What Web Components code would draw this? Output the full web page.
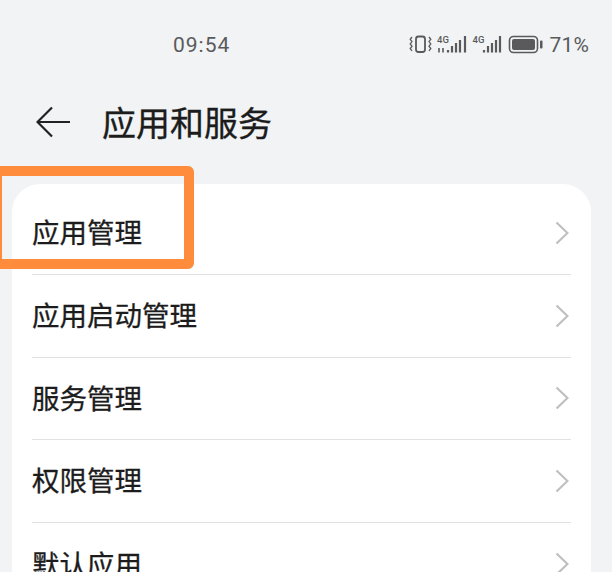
<!DOCTYPE html>
<html>
<head>
<meta charset="utf-8">
<style>
  html, body { margin: 0; height: 100%; overflow: hidden; background: #f1f3f5; }
  body { font-family: "Noto Sans CJK SC", "Noto Sans", sans-serif; color: #1c1c1c; }
</style>
</head>
<body>
<settings-page>
  <status-bar slot="status" time="09:54" battery="71%"></status-bar>
  <title-bar slot="title">应用和服务</title-bar>
  <settings-card>
    <settings-row>应用管理</settings-row>
    <settings-row>应用启动管理</settings-row>
    <settings-row>服务管理</settings-row>
    <settings-row>权限管理</settings-row>
    <settings-row last>默认应用</settings-row>
  </settings-card>
  <focus-mark></focus-mark>
</settings-page>

<script>
class SettingsPage extends HTMLElement {
  constructor(){
    super();
    this.attachShadow({ mode: 'open' }).innerHTML = /*html*/ `
      <style>
        :host{
          display: block;
          position: relative;
          width: 612px;
          height: 572px;
          overflow: hidden;
          background: #f1f3f5;
        }
      </style>
      <slot name="status"></slot>
      <slot name="title"></slot>
      <slot></slot>
    `;
  }
}

class StatusBar extends HTMLElement {
  constructor(){
    super();
    const time = this.getAttribute('time');
    const battery = this.getAttribute('battery');
    this.attachShadow({ mode: 'open' }).innerHTML = /*html*/ `
      <style>
        :host{
          display: flex;
          align-items: center;
          height: 30px;
          padding: 30px 23px 0 173px;
          color: #5a5a5c;
          font-family: "Roboto", "Noto Sans", sans-serif;
          font-size: 21px;
        }
        .time{ flex: 1; letter-spacing: 1px; }
        .icons{ display: flex; align-items: center; }
        svg{ display: block; }
        .level{ margin-left: 5px; letter-spacing: .2px; }
        text{ font: 500 9.500px "Roboto", sans-serif; fill: #5a5a5c; }
      </style>
      <span class="time">${time}</span>
      <span class="icons">
        <svg width="136" height="24" viewBox="0 0 136 24" fill="none" stroke="#5a5a5c">
          <rect x="8" y="3.500" width="9" height="15.500" rx="2.500" stroke-width="1.800"/>
          <path d="M4 4l-1.800 2.300L4 8.600 2.200 10.900 4 13.200l-1.800 2.300L4 17.800M21 4l1.800 2.300L21 8.600l1.800 2.300L21 13.200l1.800 2.300L21 17.800" stroke-width="1.300"/>
          <text x="29" y="10" stroke="none">4G</text>
          <path d="M31 15v4.500M35 15v4.500" stroke-width="1.600"/>
          <path d="M40 17v2.500M44 13v6.500M48 10v9.500M52 7v12.500M57 3v16.500" stroke-width="2.200"/>
          <text x="64.500" y="10" stroke="none">4G</text>
          <path d="M76 17v2.500M80 13v6.500M84 10v9.500M88 7v12.500M92 3v16.500" stroke-width="2.200"/>
          <rect x="101.500" y="3.500" width="28" height="16" rx="4" stroke-width="1.600"/>
          <rect x="104" y="6" width="23" height="11" rx="2" fill="#5a5a5c" stroke="none"/>
          <rect x="132" y="7.500" width="2.500" height="8" rx="1" fill="#5a5a5c" stroke="none"/>
        </svg>
        <span class="level">${battery}</span>
      </span>
    `;
  }
}

class TitleBar extends HTMLElement {
  constructor(){
    super();
    this.attachShadow({ mode: 'open' }).innerHTML = /*html*/ `
      <style>
        :host{
          display: flex;
          align-items: center;
          height: 60px;
          margin-top: 32px;
          padding-left: 36px;
          color: #1c1c1c;
          font-size: 34px;
          font-weight: 400;
          -webkit-text-stroke: .35px #1c1c1c;
          line-height: 1;
        }
        svg{ display: block; margin-right: 32px; }
      </style>
      <svg width="34" height="32" viewBox="0 0 34 32" fill="none" stroke="#222" stroke-width="2.200">
        <path d="M34 16H1.500M16 1.500L1.500 16 16 30.500"/>
      </svg>
      <span><slot></slot></span>
    `;
  }
}

class SettingsCard extends HTMLElement {
  constructor(){
    super();
    this.attachShadow({ mode: 'open' }).innerHTML = /*html*/ `
      <style>
        :host{
          display: block;
          margin: 32px 21px 0 12px;
          padding: 8px 20px 0;
          background: #fff;
          border-radius: 28px;
        }
      </style>
      <slot></slot>
    `;
  }
}

class SettingsRow extends HTMLElement {
  constructor(){
    super();
    this.attachShadow({ mode: 'open' }).innerHTML = /*html*/ `
      <style>
        :host{
          display: flex;
          align-items: center;
          justify-content: space-between;
          box-sizing: border-box;
          height: 82.750px;
          padding-right: 2px;
          border-bottom: 1px solid #e1e2e4;
          color: #1c1c1c;
          font-size: 27.500px;
          font-weight: 400;
          -webkit-text-stroke: .3px #1c1c1c;
          line-height: 1;
        }
        :host([last]){ border-bottom: none; }
        span{ margin-bottom: 2px; }
        svg{ display: block; }
      </style>
      <span><slot></slot></span>
      <svg width="14" height="24" viewBox="0 0 14 24" fill="none" stroke="#bfbfc1" stroke-width="2.200">
        <path d="M1.500 1.500L12.500 12 1.500 22.500"/>
      </svg>
    `;
  }
}

// the annotation drawn over the screenshot
class FocusMark extends HTMLElement {
  constructor(){
    super();
    this.attachShadow({ mode: 'open' }).innerHTML = /*html*/ `
      <style>
        :host{
          position: absolute;
          left: -8px;
          top: 166px;
          box-sizing: border-box;
          width: 202px;
          height: 103px;
          border: 10px solid #ff8c3c;
          border-radius: 6px;
        }
      </style>
    `;
  }
}

customElements.define('settings-page', SettingsPage);
customElements.define('status-bar', StatusBar);
customElements.define('title-bar', TitleBar);
customElements.define('settings-card', SettingsCard);
customElements.define('settings-row', SettingsRow);
customElements.define('focus-mark', FocusMark);
</script>
</body>
</html>
